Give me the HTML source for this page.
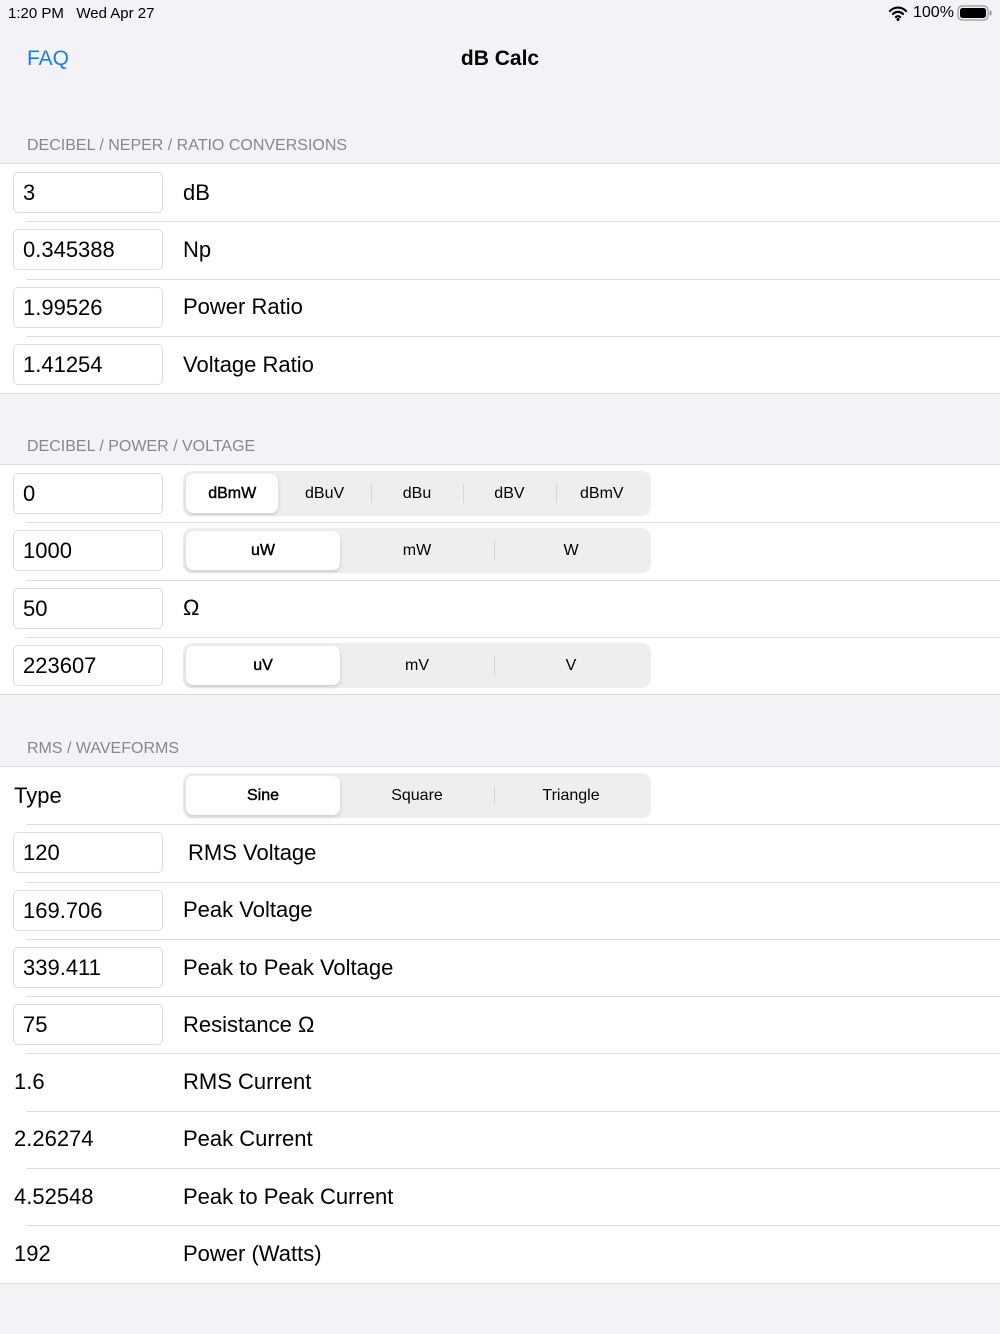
<!DOCTYPE html>
<html><head><meta charset="utf-8"><style>
*{box-sizing:border-box;margin:0;padding:0}
body{width:1000px;height:1334px;background:#f2f2f7;font-family:"Liberation Sans",sans-serif;position:relative;overflow:hidden;color:#000}
.abs{position:absolute}
.hdr{position:absolute;left:27px;font-size:16px;color:#87878c}
.sec{position:absolute;left:0;width:1000px;background:#fff;border-top:1px solid #dcdce0;border-bottom:1px solid #dcdce0}
.row{height:57.3px;position:relative;display:flex;align-items:center}
.row+.row:before{content:"";position:absolute;left:26px;right:0;top:0;border-top:1px solid #dedee2}
.tf{position:absolute;left:13px;width:150px;height:41px;border:1px solid #dcdcdf;border-radius:5px;font-size:22px;padding-left:9px;line-height:39px}
.lb{position:absolute;left:183px;font-size:22px}
.val{position:absolute;left:14px;font-size:22px}
.seg{position:absolute;left:183px;width:468px;height:45px;background:#eeeeef;border-radius:9px;display:flex;align-items:center;font-size:16px;padding:3px}
.seg div{flex:1;text-align:center;height:39px;line-height:39px;position:relative}
.seg div.on{background:#fff;border-radius:7px;box-shadow:0 2px 4px rgba(0,0,0,.15);-webkit-text-stroke:0.4px #000}
.seg div.sp:before{content:"";position:absolute;left:0;top:10px;height:19px;border-left:1px solid #d6d6d8}
</style></head><body>
<div class="abs" style="left:8px;top:5px;font-size:15px">1:20 PM&nbsp;&nbsp;&nbsp;Wed Apr 27</div>
<div class="abs" style="left:888px;top:4px;font-size:16px;display:flex;align-items:center">
<svg width="20" height="16" viewBox="0 0 20 16"><path d="M2 6a11 11 0 0 1 16 0M5 9a7 7 0 0 1 10 0M8 12a3 3 0 0 1 4 0" stroke="#000" stroke-width="2.2" fill="none" stroke-linecap="round"/><circle cx="10" cy="14.5" r="1.5"/></svg>
<span style="margin-left:5px">100%</span>
<svg width="36" height="18" viewBox="0 0 36 18" style="margin-left:3px"><rect x="1" y="2" width="30" height="14" rx="4" fill="none" stroke="#999" stroke-width="1.2"/><rect x="3" y="4" width="26" height="10" rx="2.5" fill="#000"/><rect x="32.5" y="6.5" width="2" height="5" rx="1" fill="#999"/></svg></div>
<div class="abs" style="left:27px;top:47px;font-size:21px;color:#1a7cf5">FAQ</div>
<div class="abs" style="left:0;width:1000px;text-align:center;top:47px;font-size:21px;font-weight:bold">dB Calc</div>

<div class="hdr" style="top:137px">DECIBEL / NEPER / RATIO CONVERSIONS</div>
<div class="sec" style="top:163px">
<div class="row"><div class="tf">3</div><div class="lb">dB</div></div>
<div class="row"><div class="tf">0.345388</div><div class="lb">Np</div></div>
<div class="row"><div class="tf">1.99526</div><div class="lb">Power Ratio</div></div>
<div class="row"><div class="tf">1.41254</div><div class="lb">Voltage Ratio</div></div>
</div>

<div class="hdr" style="top:438px">DECIBEL / POWER / VOLTAGE</div>
<div class="sec" style="top:464px">
<div class="row"><div class="tf">0</div><div class="seg"><div class="on">dBmW</div><div>dBuV</div><div class="sp">dBu</div><div class="sp">dBV</div><div class="sp">dBmV</div></div></div>
<div class="row"><div class="tf">1000</div><div class="seg"><div class="on">uW</div><div>mW</div><div class="sp">W</div></div></div>
<div class="row"><div class="tf">50</div><div class="lb">Ω</div></div>
<div class="row"><div class="tf">223607</div><div class="seg"><div class="on">uV</div><div>mV</div><div class="sp">V</div></div></div>
</div>

<div class="hdr" style="top:740px">RMS / WAVEFORMS</div>
<div class="sec" style="top:766px">
<div class="row"><div class="val">Type</div><div class="seg"><div class="on">Sine</div><div>Square</div><div class="sp">Triangle</div></div></div>
<div class="row"><div class="tf">120</div><div class="lb" style="left:188px">RMS Voltage</div></div>
<div class="row"><div class="tf">169.706</div><div class="lb">Peak Voltage</div></div>
<div class="row"><div class="tf">339.411</div><div class="lb">Peak to Peak Voltage</div></div>
<div class="row"><div class="tf">75</div><div class="lb">Resistance Ω</div></div>
<div class="row"><div class="val">1.6</div><div class="lb">RMS Current</div></div>
<div class="row"><div class="val">2.26274</div><div class="lb">Peak Current</div></div>
<div class="row"><div class="val">4.52548</div><div class="lb">Peak to Peak Current</div></div>
<div class="row"><div class="val">192</div><div class="lb">Power (Watts)</div></div>
</div>
</body></html>
